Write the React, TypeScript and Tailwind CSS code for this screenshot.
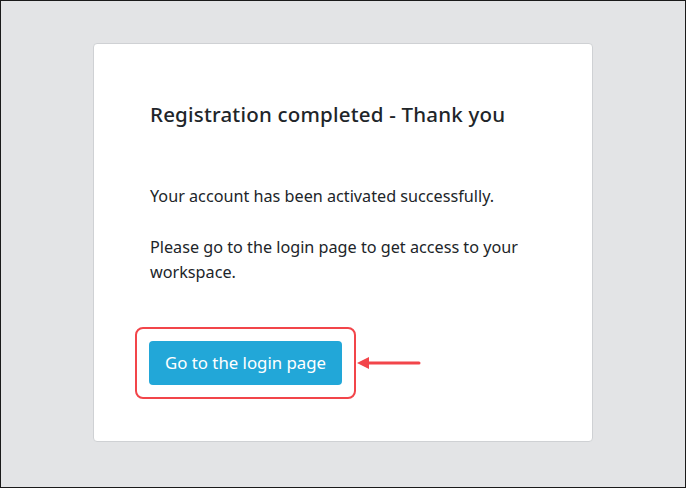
export default function App() {
  return (
    <div
      className="flex h-[488px] w-[686px] items-start justify-center border border-[#1a1a1a] bg-[#e3e4e6] pt-[42px]"
      style={{ fontFamily: '"Noto Sans", "Open Sans", sans-serif' }}
    >
      <div className="flex h-[399px] w-[500px] flex-col rounded-[4px] border border-[#cfd1d4] bg-white px-[56px] pt-[56px]">
        <h1 className="text-[20.5px] leading-[28px] font-medium tracking-[0.2px] text-[#212529]">
          Registration completed - Thank you
        </h1>

        <p className="mt-[56px] text-[16.2px] leading-[25px] text-[#212529]">
          Your account has been activated successfully.
        </p>
        <p className="mt-[26px] text-[16.2px] leading-[25px] text-[#212529]">
          Please go to the login page to get access to your workspace.
        </p>

        <div className="mt-[42px] -ml-[15px] flex items-center">
          <div className="rounded-[8px] border-2 border-[#f2454a] p-[12px]">
            <button
              type="button"
              className="h-[44px] w-[193px] rounded-[4px] bg-[#22a7d8] text-[16.8px] text-white"
            >
              Go to the login page
            </button>
          </div>
          <svg width="64" height="14" viewBox="0 0 64 14" className="ml-[1px]">
            <path d="M62 7H10" stroke="#f2454a" strokeWidth="3" strokeLinecap="round" />
            <path d="M0 7L12 1V13Z" fill="#f2454a" />
          </svg>
        </div>
      </div>
    </div>
  );
}
